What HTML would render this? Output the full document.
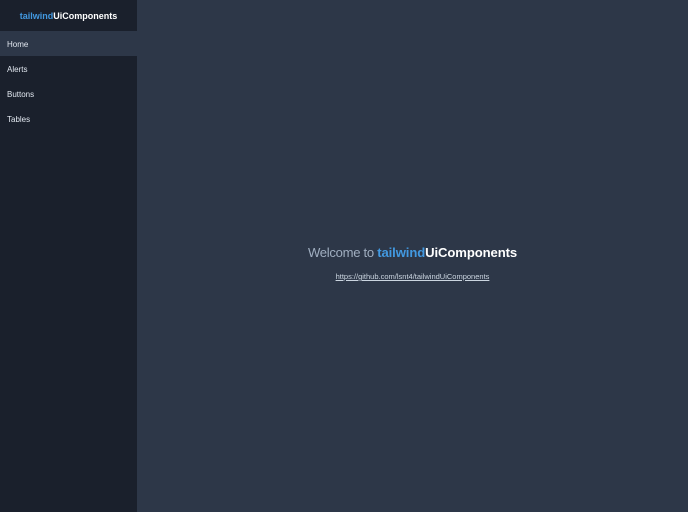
<!DOCTYPE html>
<html><head><style>
body{margin:0;width:688px;height:512px;background:#2d3748;font-family:"Liberation Sans",sans-serif;overflow:hidden;position:relative}
.side{position:absolute;left:0;top:0;width:137px;height:512px;background:#1a202c}
.logo{height:31px;line-height:33px;text-align:center;font-size:9px;font-weight:bold;color:#fff}
.b{color:#4299e1}
.item{height:25px;line-height:27px;padding-left:7px;font-size:8px;color:#e2e8f0}
.act{background:#2d3748}
.main{position:absolute;left:137px;right:0;top:245px;text-align:center}
h1{margin:0;font-size:13.1px;font-weight:normal;color:#a0aec0;letter-spacing:-0.3px}
h1 b{font-weight:bold;color:#fff;letter-spacing:-0.1px}
a{display:inline-block;margin-top:12px;font-size:7.5px;color:#cbd5e0;text-decoration:underline}
</style></head><body>
<div class="side">
<div class="logo"><span class="b">tailwind</span>UiComponents</div>
<div class="item act">Home</div>
<div class="item">Alerts</div>
<div class="item">Buttons</div>
<div class="item">Tables</div>
</div>
<div class="main">
<h1>Welcome to <b><span class="b">tailwind</span>UiComponents</b></h1>
<a>https://github.com/lsnt4/tailwindUiComponents</a>
</div>
</body></html>
